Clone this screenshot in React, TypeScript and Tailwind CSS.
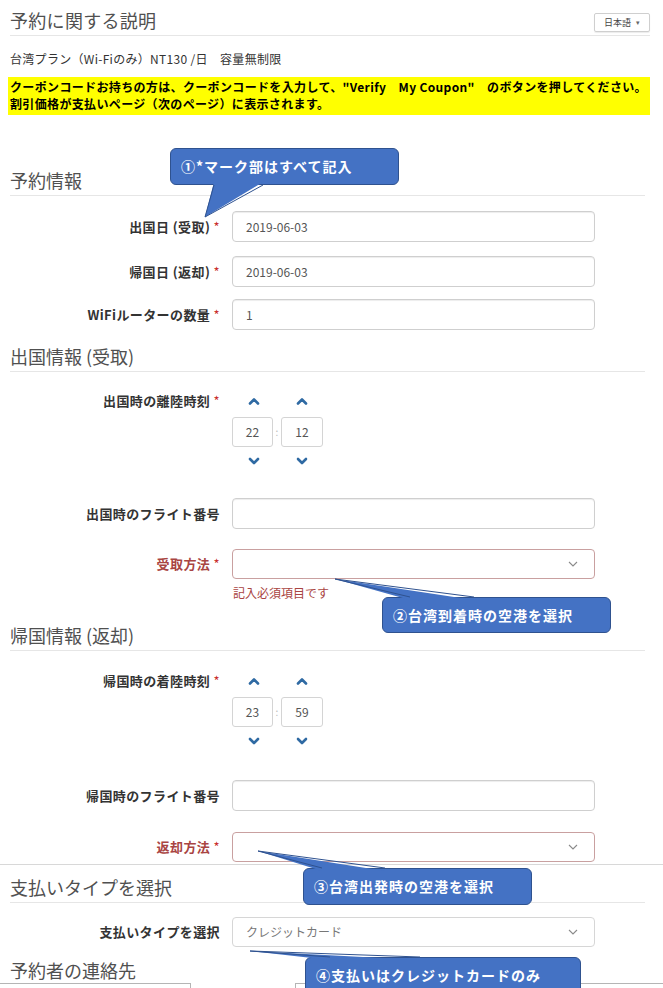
import React from "react";

const Req = () => <span className="text-[#c9302c] font-normal"> *</span>;

function Chev({ up }: { up?: boolean }) {
  return (
    <svg width="12" height="8" viewBox="0 0 12 8">
      <polyline
        points={up ? "2,6.5 6,2.5 10,6.5" : "2,2 6,6 10,2"}
        fill="none"
        stroke="#2f6aa3"
        strokeWidth="2.6"
        strokeLinecap="round"
        strokeLinejoin="round"
      />
    </svg>
  );
}

function SelChev() {
  return (
    <svg width="10" height="6" viewBox="0 0 10 6">
      <polyline points="1,1 5,5 9,1" fill="none" stroke="#8a8a8a" strokeWidth="1.1" />
    </svg>
  );
}

function Label({ children, error }: { children: React.ReactNode; error?: boolean }) {
  return (
    <div
      className={
        "w-[220px] shrink-0 text-right text-[13px] tracking-[0.4px] leading-[16px] font-bold " +
        (error ? "text-[#a94442]" : "text-[#333]")
      }
    >
      {children}
    </div>
  );
}

function Input({ value }: { value?: string }) {
  return (
    <div className="ml-[12px] w-[363px] h-[31px] border border-[#cfcfcf] rounded-[4px] shadow-[inset_0_1px_1px_rgba(0,0,0,0.075)] flex items-center px-[13px] text-[12px] text-[#555] bg-white">
      {value}
    </div>
  );
}

function Select({ error, placeholder }: { error?: boolean; placeholder?: string }) {
  return (
    <div
      className={
        "ml-[12px] w-[363px] h-[30px] border rounded-[4px] flex items-center justify-between pl-[13px] pr-[16px] text-[12px] text-[#777] bg-white " +
        (error ? "border-[#c9a0a0]" : "border-[#d6d6d6]")
      }
    >
      <span>{placeholder}</span>
      <SelChev />
    </div>
  );
}

function Heading({ children, className }: { children: React.ReactNode; className: string }) {
  return (
    <div className={"mx-[10px] mr-[18px] border-b border-[#e6e6e6] pb-[3px] text-[18px] leading-[24px] text-[#505050] " + className}>
      {children}
    </div>
  );
}

function TimeBox({ v }: { v: string }) {
  return (
    <div className="h-[30px] border border-[#d4d4d4] rounded-[3px] flex items-center justify-center text-[12px] text-[#555] w-full">
      {v}
    </div>
  );
}

function TimePicker({ label, h, m, className }: { label: string; h: string; m: string; className: string }) {
  return (
    <div className={"flex " + className}>
      <Label>
        {label}
        <Req />
      </Label>
      <div className="ml-[12px] flex flex-col">
        <div className="flex h-[16px] items-center">
          <div className="w-[44px] flex justify-center"><Chev up /></div>
          <div className="w-[5px]" />
          <div className="w-[42px] flex justify-center"><Chev up /></div>
        </div>
        <div className="mt-[8px] flex items-center">
          <div className="w-[41px]"><TimeBox v={h} /></div>
          <div className="w-[8px] text-center text-[10px] text-[#bbb] leading-none">:</div>
          <div className="w-[42px]"><TimeBox v={m} /></div>
        </div>
        <div className="mt-[6px] flex h-[16px] items-center">
          <div className="w-[44px] flex justify-center"><Chev /></div>
          <div className="w-[5px]" />
          <div className="w-[42px] flex justify-center"><Chev /></div>
        </div>
      </div>
    </div>
  );
}

function Callout({ text, className }: { text: string; className: string }) {
  return (
    <div
      className={
        "absolute bg-[#4472c4] border border-[#2f528f] rounded-[6px] text-white font-bold text-[14px] tracking-[1px] flex items-center pl-[10px] " +
        className
      }
    >
      {text}
    </div>
  );
}

export default function App() {
  return (
    <div className="relative w-[663px] h-[988px] overflow-hidden bg-white font-['Noto_Sans_CJK_JP','Noto_Sans',sans-serif]">
      {/* header */}
      <div className="mx-[10px] mr-[13px] pt-[8px] pb-[3px] border-b border-[#e6e6e6] flex justify-between items-start">
        <div className="text-[18px] leading-[24px] text-[#505050] tracking-[0.3px]">予約に関する説明</div>
        <div className="mt-[5px] h-[19px] w-[56px] border border-[#cfcfcf] rounded-[2px] flex items-center justify-center gap-[5px] text-[9px] text-[#444] shadow-[0_1px_1px_rgba(0,0,0,0.08)]">
          <span>日本語</span>
          <span className="text-[7px] text-[#666]">▾</span>
        </div>
      </div>

      <div className="mt-[15px] ml-[10px] text-[12px] tracking-[0.3px] leading-[16px] text-[#333]">
        台湾プラン（Wi-Fiのみ）NT130 /日　容量無制限
      </div>

      <div className="mt-[10px] ml-[8px] mr-[13px] bg-[#ffff00] pt-[1px] pb-[3px] pl-[2px] text-[12px] tracking-[0.35px] leading-[17px] font-bold text-black">
        <div>クーポンコードお持ちの方は、クーポンコードを入力して、"Verify　My Coupon"　のボタンを押してください。</div>
        <div>割引価格が支払いページ（次のページ）に表示されます。</div>
      </div>

      <Heading className="mt-[53px]">予約情報</Heading>

      <div className="mt-[15px] flex items-center">
        <Label>出国日 (受取)<Req /></Label>
        <Input value="2019-06-03" />
      </div>
      <div className="mt-[14px] flex items-center">
        <Label>帰国日 (返却)<Req /></Label>
        <Input value="2019-06-03" />
      </div>
      <div className="mt-[12px] flex items-center">
        <Label>WiFiルーターの数量<Req /></Label>
        <Input value="1" />
      </div>

      <Heading className="mt-[14px]">出国情報 (受取)</Heading>

      <TimePicker className="mt-[21px]" label="出国時の離陸時刻" h="22" m="12" />

      <div className="mt-[29px] flex items-center">
        <Label>出国時のフライト番号</Label>
        <Input />
      </div>
      <div className="mt-[20px] flex items-center">
        <Label error>受取方法<Req /></Label>
        <Select error />
      </div>
      <div className="mt-[6px] ml-[233px] text-[12px] leading-[16px] text-[#a94442]">記入必須項目です</div>

      <Heading className="mt-[22px]">帰国情報 (返却)</Heading>

      <TimePicker className="mt-[22px]" label="帰国時の着陸時刻" h="23" m="59" />

      <div className="mt-[31px] flex items-center">
        <Label>帰国時のフライト番号</Label>
        <Input />
      </div>
      <div className="mt-[21px] flex items-center">
        <Label error>返却方法<Req /></Label>
        <Select error />
      </div>

      <div className="mt-[2px] h-px bg-[#d8d8d8]" />

      <Heading className="mt-[10px]">支払いタイプを選択</Heading>

      <div className="mt-[14px] flex items-center">
        <Label>支払いタイプを選択</Label>
        <Select placeholder="クレジットカード" />
      </div>

      <div className="mt-[11px] ml-[10px] text-[18px] leading-[24px] text-[#505050]">予約者の連絡先</div>

      <div className="mt-[1px] flex">
        <div className="w-[191px] h-[12px] border-t border-r border-[#b5b5b5]" />
        <div className="ml-[104px] flex-1 h-[12px] border-t border-l border-[#b5b5b5]" />
      </div>

      {/* callouts */}
      <Callout className="left-[170px] top-[148px] w-[229px] h-[37px]" text="①*マーク部はすべて記入" />
      <Callout className="left-[382px] top-[597px] w-[229px] h-[36px]" text="②台湾到着時の空港を選択" />
      <Callout className="left-[303px] top-[868px] w-[229px] h-[37px]" text="③台湾出発時の空港を選択" />
      <Callout className="left-[305px] top-[957px] w-[276px] h-[40px] items-start pt-[7px]" text="④支払いはクレジットカードのみ" />

      <svg className="absolute left-0 top-0 pointer-events-none" width="663" height="988">
        <g fill="#4472c4" stroke="none">
          <polygon points="214,182 263,182 205,217" />
          <polygon points="410,600 474,600 335,579" />
          <polygon points="322,871 385,871 258,851" />
          <polygon points="330,960 420,960 250,951" />
        </g>
        <g stroke="#2f528f" strokeWidth="1" fill="none">
          <polyline points="214,185 205,217 263,185" />
          <polyline points="410,597 335,579 474,597" />
          <polyline points="322,868 258,851 385,868" />
          <polyline points="330,957 250,951 420,957" />
        </g>
      </svg>
    </div>
  );
}
